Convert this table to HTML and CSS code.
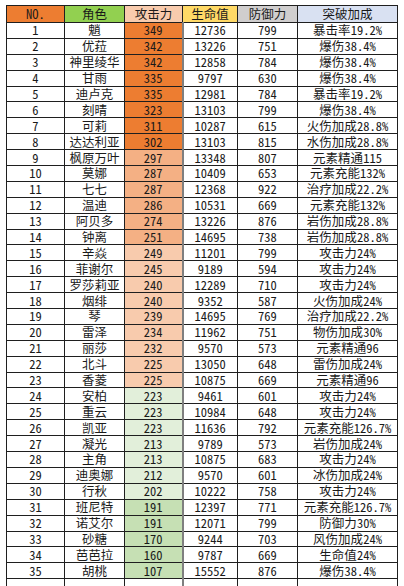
FILE: index.html
```html
<!DOCTYPE html>
<html lang="zh-CN">
<head>
<meta charset="utf-8">
<title>角色突破数据</title>
<link rel="stylesheet" href="styles.css">
</head>
<body>
<div class="sheet">
<table class="grid">
<colgroup>
<col class="c-no"><col class="c-name"><col class="c-atk"><col class="c-hp"><col class="c-def"><col class="c-bonus">
</colgroup>
<thead>
<tr class="head">
<th class="h-no"><span class="a">NO.</span></th>
<th class="h-name">角色</th>
<th class="h-atk">攻击力</th>
<th class="h-hp">生命值</th>
<th class="h-def">防御力</th>
<th class="h-bonus">突破加成</th>
</tr>
</thead>
<tbody>
<tr><td class="a">1</td><td>魈</td><td class="a atk1">349</td><td class="a">12736</td><td class="a">799</td><td>暴击率<span class="a">19.2%</span></td></tr>
<tr><td class="a">2</td><td>优菈</td><td class="a atk1">342</td><td class="a">13226</td><td class="a">751</td><td>爆伤<span class="a">38.4%</span></td></tr>
<tr><td class="a">3</td><td>神里绫华</td><td class="a atk1">342</td><td class="a">12858</td><td class="a">784</td><td>爆伤<span class="a">38.4%</span></td></tr>
<tr><td class="a">4</td><td>甘雨</td><td class="a atk1">335</td><td class="a">9797</td><td class="a">630</td><td>爆伤<span class="a">38.4%</span></td></tr>
<tr><td class="a">5</td><td>迪卢克</td><td class="a atk1">335</td><td class="a">12981</td><td class="a">784</td><td>暴击率<span class="a">19.2%</span></td></tr>
<tr><td class="a">6</td><td>刻晴</td><td class="a atk1">323</td><td class="a">13103</td><td class="a">799</td><td>爆伤<span class="a">38.4%</span></td></tr>
<tr><td class="a">7</td><td>可莉</td><td class="a atk1">311</td><td class="a">10287</td><td class="a">615</td><td>火伤加成<span class="a">28.8%</span></td></tr>
<tr><td class="a">8</td><td>达达利亚</td><td class="a atk1">302</td><td class="a">13103</td><td class="a">815</td><td>水伤加成<span class="a">28.8%</span></td></tr>
<tr><td class="a">9</td><td>枫原万叶</td><td class="a atk2">297</td><td class="a">13348</td><td class="a">807</td><td>元素精通<span class="a">115</span></td></tr>
<tr><td class="a">10</td><td>莫娜</td><td class="a atk2">287</td><td class="a">10409</td><td class="a">653</td><td>元素充能<span class="a">132%</span></td></tr>
<tr><td class="a">11</td><td>七七</td><td class="a atk2">287</td><td class="a">12368</td><td class="a">922</td><td>治疗加成<span class="a">22.2%</span></td></tr>
<tr><td class="a">12</td><td>温迪</td><td class="a atk2">286</td><td class="a">10531</td><td class="a">669</td><td>元素充能<span class="a">132%</span></td></tr>
<tr><td class="a">13</td><td>阿贝多</td><td class="a atk2">274</td><td class="a">13226</td><td class="a">876</td><td>岩伤加成<span class="a">28.8%</span></td></tr>
<tr><td class="a">14</td><td>钟离</td><td class="a atk2">251</td><td class="a">14695</td><td class="a">738</td><td>岩伤加成<span class="a">28.8%</span></td></tr>
<tr><td class="a">15</td><td>辛焱</td><td class="a atk3">249</td><td class="a">11201</td><td class="a">799</td><td>攻击力<span class="a">24%</span></td></tr>
<tr><td class="a">16</td><td>菲谢尔</td><td class="a atk3">245</td><td class="a">9189</td><td class="a">594</td><td>攻击力<span class="a">24%</span></td></tr>
<tr><td class="a">17</td><td>罗莎莉亚</td><td class="a atk3">240</td><td class="a">12289</td><td class="a">710</td><td>攻击力<span class="a">24%</span></td></tr>
<tr><td class="a">18</td><td>烟绯</td><td class="a atk3">240</td><td class="a">9352</td><td class="a">587</td><td>火伤加成<span class="a">24%</span></td></tr>
<tr><td class="a">19</td><td>琴</td><td class="a atk3">239</td><td class="a">14695</td><td class="a">769</td><td>治疗加成<span class="a">22.2%</span></td></tr>
<tr><td class="a">20</td><td>雷泽</td><td class="a atk3">234</td><td class="a">11962</td><td class="a">751</td><td>物伤加成<span class="a">30%</span></td></tr>
<tr><td class="a">21</td><td>丽莎</td><td class="a atk3">232</td><td class="a">9570</td><td class="a">573</td><td>元素精通<span class="a">96</span></td></tr>
<tr><td class="a">22</td><td>北斗</td><td class="a atk3">225</td><td class="a">13050</td><td class="a">648</td><td>雷伤加成<span class="a">24%</span></td></tr>
<tr><td class="a">23</td><td>香菱</td><td class="a atk3">225</td><td class="a">10875</td><td class="a">669</td><td>元素精通<span class="a">96</span></td></tr>
<tr><td class="a">24</td><td>安柏</td><td class="a atk4">223</td><td class="a">9461</td><td class="a">601</td><td>攻击力<span class="a">24%</span></td></tr>
<tr><td class="a">25</td><td>重云</td><td class="a atk4">223</td><td class="a">10984</td><td class="a">648</td><td>攻击力<span class="a">24%</span></td></tr>
<tr><td class="a">26</td><td>凯亚</td><td class="a atk4">223</td><td class="a">11636</td><td class="a">792</td><td>元素充能<span class="a">126.7%</span></td></tr>
<tr><td class="a">27</td><td>凝光</td><td class="a atk4">213</td><td class="a">9789</td><td class="a">573</td><td>岩伤加成<span class="a">24%</span></td></tr>
<tr><td class="a">28</td><td>主角</td><td class="a atk4">213</td><td class="a">10875</td><td class="a">683</td><td>攻击力<span class="a">24%</span></td></tr>
<tr><td class="a">29</td><td>迪奥娜</td><td class="a atk4">212</td><td class="a">9570</td><td class="a">601</td><td>冰伤加成<span class="a">24%</span></td></tr>
<tr><td class="a">30</td><td>行秋</td><td class="a atk4">202</td><td class="a">10222</td><td class="a">758</td><td>攻击力<span class="a">24%</span></td></tr>
<tr><td class="a">31</td><td>班尼特</td><td class="a atk5">191</td><td class="a">12397</td><td class="a">771</td><td>元素充能<span class="a">126.7%</span></td></tr>
<tr><td class="a">32</td><td>诺艾尔</td><td class="a atk5">191</td><td class="a">12071</td><td class="a">799</td><td>防御力<span class="a">30%</span></td></tr>
<tr><td class="a">33</td><td>砂糖</td><td class="a atk5">170</td><td class="a">9244</td><td class="a">703</td><td>风伤加成<span class="a">24%</span></td></tr>
<tr><td class="a">34</td><td>芭芭拉</td><td class="a atk5">160</td><td class="a">9787</td><td class="a">669</td><td>生命值<span class="a">24%</span></td></tr>
<tr><td class="a">35</td><td>胡桃</td><td class="a atk5">107</td><td class="a">15552</td><td class="a">876</td><td>爆伤<span class="a">38.4%</span></td></tr>
<tr class="blank"><td></td><td></td><td></td><td></td><td></td><td></td></tr>
</tbody>
</table>
</div>
</body>
</html>
```

FILE: styles.css
```css
html, body {
  margin: 0;
  padding: 0;
  background: #ffffff;
}

.sheet {
  padding: 5px 0 0 6px;
  height: 586px;
  overflow: hidden;
  box-sizing: border-box;
}

.grid {
  border-collapse: collapse;
  table-layout: fixed;
  width: 391px;
  font-family: "Noto Sans CJK SC", sans-serif;
  font-size: 12.5px;
  color: #1a1a1a;
  font-feature-settings: "hwid" 1;
}

.c-no { width: 58px; }
.c-name { width: 60px; }
.c-atk { width: 58px; }
.c-hp { width: 55px; }
.c-def { width: 60px; }
.c-bonus { width: 100px; }

.grid th,
.grid td {
  border: 1px solid #1f1f1f;
  padding: 0;
  text-align: center;
  vertical-align: middle;
  white-space: nowrap;
  font-weight: 400;
  line-height: 14px;
}

.head th { height: 16px; }
.grid tbody tr { height: 15.9px; }

.a {
  font-feature-settings: "hwid" 1;
}

.h-no { background: #ed7d31; }
.h-name { background: #92d050; }
.h-atk { background: #f8cbad; }
.h-hp { background: #ffd966; }
.h-def { background: #d0cece; }
.h-bonus { background: #d9e1f2; }

.atk1 { background: #ed7d31; }
.atk2 { background: #f4b084; }
.atk3 { background: #f8cbad; }
.atk4 { background: #e2efda; }
.atk5 { background: #c6e0b4; }

.grid td:nth-child(3) { border-right: 2px solid #7f7f7f; }
```
